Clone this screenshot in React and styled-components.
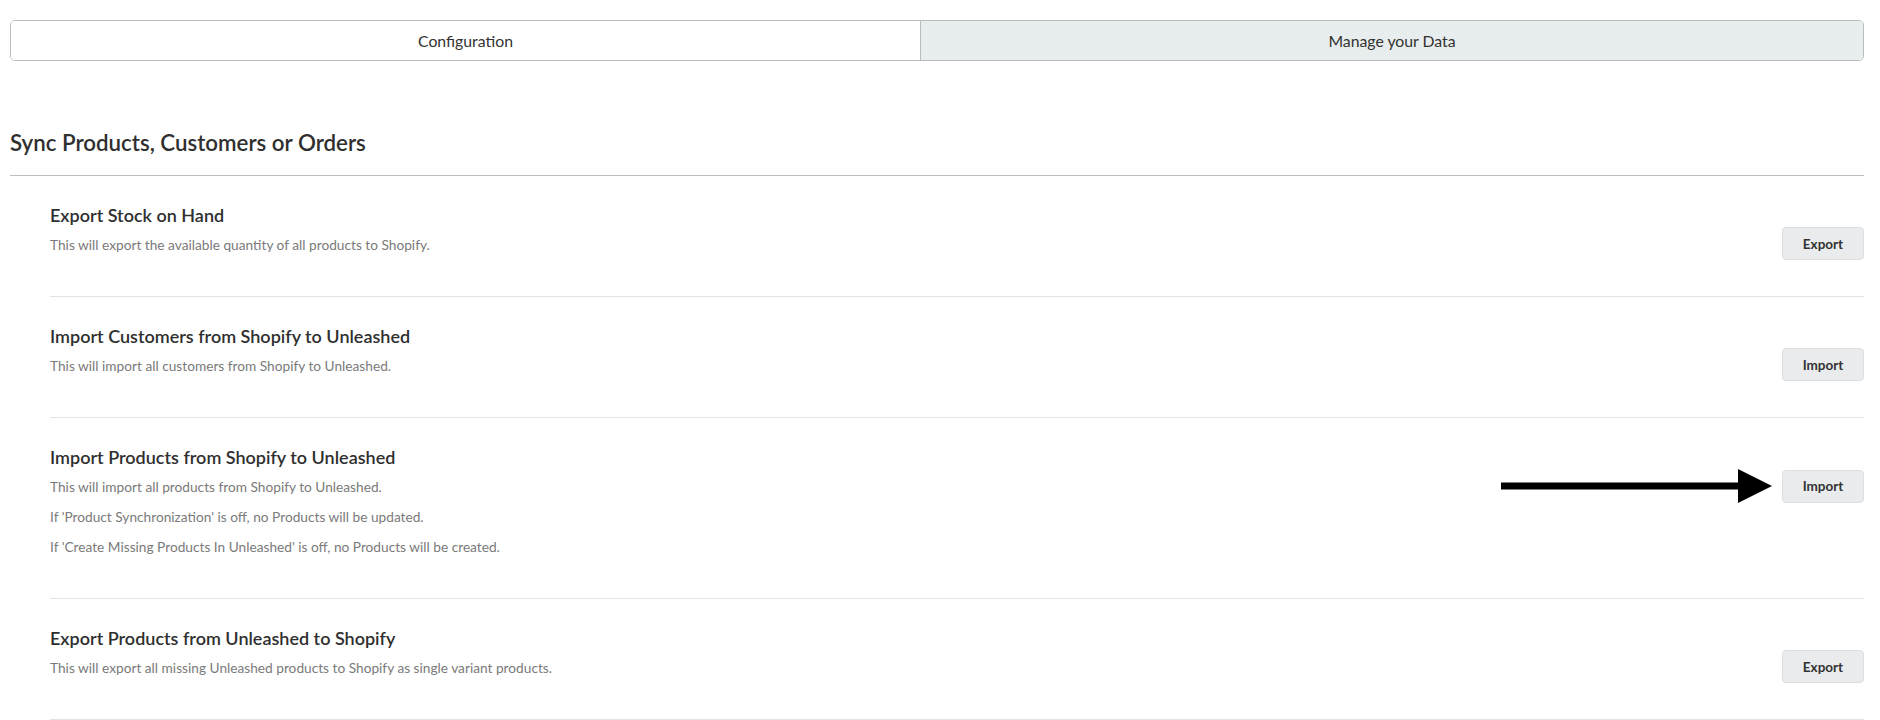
import React from "react";
import styled, { createGlobalStyle } from "styled-components";

const Global = createGlobalStyle`
  html, body { margin: 0; padding: 0; background: #fff; }
  body { font-family: Lato, "Open Sans", "Liberation Sans", sans-serif; color: #333; }
  * { box-sizing: border-box; }
`;

const Page = styled.div`
  padding: 20px 16px 0 10px;
`;

const Tabs = styled.div`
  display: flex;
  height: 41px;
  border: 1px solid #b9bdc0;
  border-radius: 5px;
  overflow: hidden;
`;

const Tab = styled.button`
  flex: ${(p) => p.$grow};
  display: flex;
  align-items: center;
  justify-content: center;
  border: none;
  margin: 0;
  padding: 0;
  font-family: inherit;
  font-size: 15.8px;
  color: #333;
  background: ${(p) => (p.$active ? "#e8eded" : "#fff")};
  & + & { border-left: 1px solid #b9bdc0; }
`;

const SectionTitle = styled.h2`
  margin: 69px 0 0;
  padding: 0 0 19px;
  font-size: 22.3px;
  line-height: 26px;
  font-weight: 600;
  color: #2f2f2f;
  border-bottom: 1px solid #bdbdbd;
`;

const List = styled.div`
  margin-left: 40px;
`;

const Row = styled.div`
  display: flex;
  align-items: flex-start;
  padding: 28px 0 36px;
  border-bottom: 1px solid #e4e4e4;
`;

const Info = styled.div`
  flex: 1;
  padding-bottom: 6px;
`;

const RowTitle = styled.h3`
  margin: 0;
  font-size: 18px;
  line-height: 22px;
  font-weight: 600;
  color: #2f2f2f;
`;

const Desc = styled.p`
  margin: 10px 0 0;
  font-size: 13.7px;
  line-height: 18px;
  color: #7a7a7a;
  & + & { margin-top: 12px; }
`;

const Actions = styled.div`
  display: flex;
  align-items: center;
  gap: 10px;
  margin-top: 23px;
`;

const ActionButton = styled.button`
  width: 82px;
  height: 33px;
  border: 1px solid #dcdfe2;
  border-radius: 4px;
  background: #e9ebed;
  font-family: inherit;
  font-size: 13.5px;
  font-weight: 700;
  color: #333;
  cursor: pointer;
`;

const Arrow = () => (
  <svg width="271" height="34" viewBox="0 0 271 34">
    <rect x="0" y="13.5" width="240" height="7" fill="#000" />
    <polygon points="237,0 271,17 237,34" fill="#000" />
  </svg>
);

const rows = [
  {
    title: "Export Stock on Hand",
    desc: ["This will export the available quantity of all products to Shopify."],
    action: "Export",
  },
  {
    title: "Import Customers from Shopify to Unleashed",
    desc: ["This will import all customers from Shopify to Unleashed."],
    action: "Import",
  },
  {
    title: "Import Products from Shopify to Unleashed",
    desc: [
      "This will import all products from Shopify to Unleashed.",
      "If 'Product Synchronization' is off, no Products will be updated.",
      "If 'Create Missing Products In Unleashed' is off, no Products will be created.",
    ],
    action: "Import",
    arrow: true,
  },
  {
    title: "Export Products from Unleashed to Shopify",
    desc: ["This will export all missing Unleashed products to Shopify as single variant products."],
    action: "Export",
  },
];

export default function App() {
  return (
    <>
      <Global />
      <Page>
        <Tabs>
          <Tab $grow="0 0 909px">Configuration</Tab>
          <Tab $grow="1" $active>Manage your Data</Tab>
        </Tabs>
        <SectionTitle>Sync Products, Customers or Orders</SectionTitle>
        <List>
          {rows.map((r) => (
            <Row key={r.title}>
              <Info>
                <RowTitle>{r.title}</RowTitle>
                {r.desc.map((d) => (
                  <Desc key={d}>{d}</Desc>
                ))}
              </Info>
              <Actions>
                {r.arrow && <Arrow />}
                <ActionButton>{r.action}</ActionButton>
              </Actions>
            </Row>
          ))}
        </List>
      </Page>
    </>
  );
}
